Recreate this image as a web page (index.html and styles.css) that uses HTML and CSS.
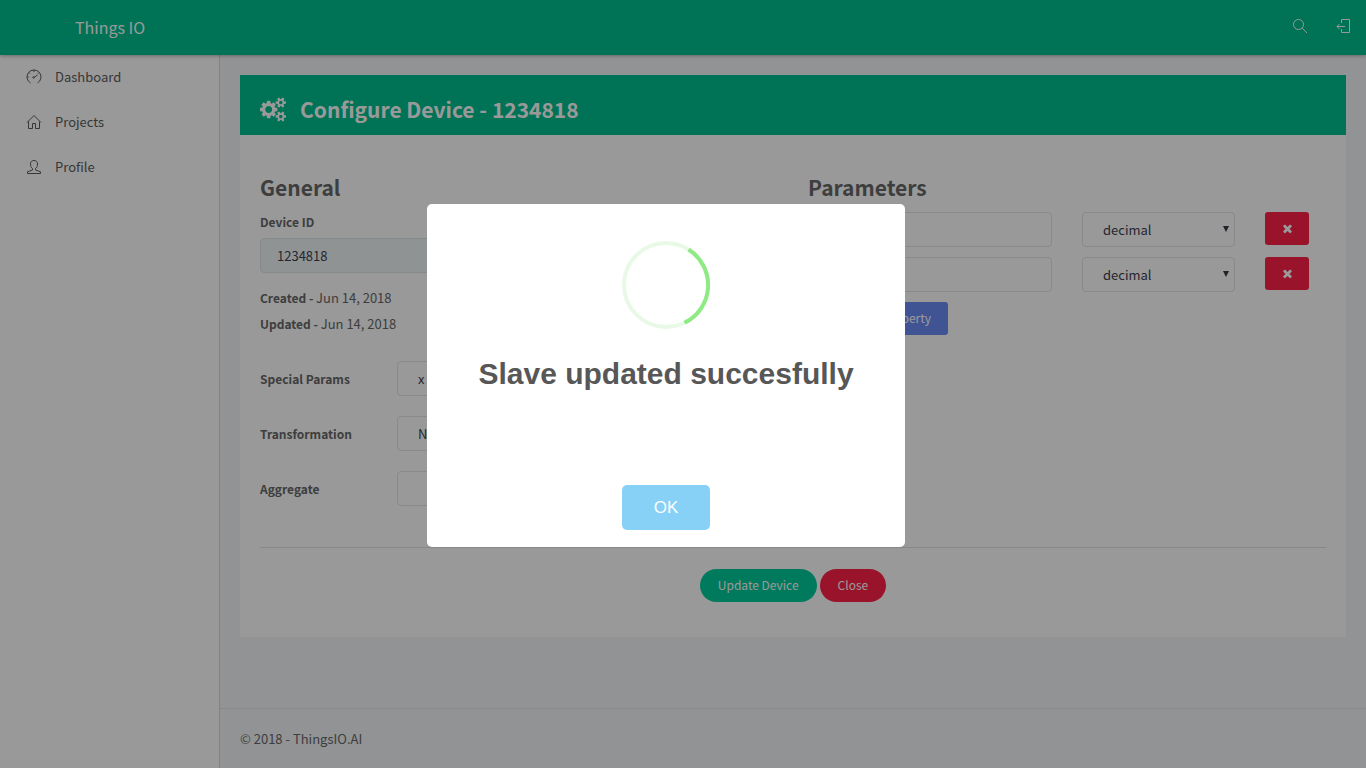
FILE: index.html
```html
<!DOCTYPE html>
<html lang="en">
<head>
<meta charset="utf-8">
<title>Things IO</title>
<link rel="stylesheet" href="styles.css">
</head>
<body>
<div class="app">
  <header class="topbar">
    <a class="brand" href="#">Things IO</a>
    <nav class="actions" aria-label="Account">
      <a href="#" aria-label="Search"><svg class="line-icon" viewBox="0 0 16 16"><circle cx="6.500" cy="6.500" r="5"/><path d="M10.200 10.200L15 15"/></svg></a>
      <a href="#" aria-label="Log out"><svg class="line-icon" viewBox="0 0 16 16"><path d="M5.500 5V1.500h8v13h-8V11M1 8.500h8M3.500 6L1 8.500l2.500 2.500"/></svg></a>
    </nav>
  </header>
  <div class="shell">
    <nav class="sidebar" aria-label="Main">
      <a href="#"><svg class="line-icon" viewBox="0 0 16 16"><path d="M4.500 14A7 7 0 1 1 11.500 14M8 8.500L11.500 6M8 1v2M3 3.500l1 1M13 3.500l-1 1M1.200 8h1.500"/><circle cx="7.500" cy="8.500" r=".7"/></svg>Dashboard</a>
      <a href="#"><svg class="line-icon" viewBox="0 0 16 16"><path d="M1 8.500L8 1.500l7 7M2.500 7.500v7h4v-5h3v5h4v-7"/></svg>Projects</a>
      <a href="#"><svg class="line-icon" viewBox="0 0 16 16"><path d="M6.500 9.500C5 8.500 4.500 7 4.500 5 4.500 2.500 6 1.500 8 1.500S11.500 2.500 11.500 5c0 2-.5 3.500-2 4.500V11l5 1.800v1.700h-13v-1.700l5-1.800z"/></svg>Profile</a>
    </nav>
    <div class="content">
      <main class="page">
        <section class="card">
          <h1 class="card-title"><svg class="gears" viewBox="0 0 1920 1792" aria-hidden="true"><path d="M896 896q0-106-75-181t-181-75-181 75-75 181 75 181 181 75 181-75 75-181zm768 512q0-52-38-90t-90-38-90 38-38 90q0 53 37.500 90.500t90.500 37.500 90.500-37.500 37.500-90.500zm0-1024q0-52-38-90t-90-38-90 38-38 90q0 53 37.500 90.500t90.500 37.500 90.500-37.500 37.500-90.500zm-384 421v185q0 10-7 19.500t-16 10.500l-155 24q-11 35-32 76 34 48 90 115 7 11 7 20 0 12-7 19-23 30-82.500 89.500t-78.500 59.500q-11 0-21-7l-115-90q-37 19-77 31-11 108-23 155-7 24-30 24h-186q-11 0-20-7.500t-10-17.500l-23-153q-34-10-75-31l-118 89q-7 7-20 7-11 0-21-8-144-133-144-160 0-9 7-19 10-14 41-53t47-61q-23-44-35-82l-152-24q-10-1-17-9.500t-7-19.500v-185q0-10 7-19.500t16-10.500l155-24q11-35 32-76-34-48-90-115-7-11-7-20 0-12 7-20 22-30 82-89t79-59q11 0 21 7l115 90q34-18 77-32 11-108 23-154 7-24 30-24h186q11 0 20 7.500t10 17.500l23 153q34 10 75 31l118-89q8-7 20-7 11 0 21 8 144 133 144 160 0 8-7 19-12 16-42 54t-45 60q23 48 34 82l152 23q10 2 17 10.500t7 19.500zm640 533v140q0 16-149 31-12 27-30 52 51 113 51 138 0 4-4 7-122 71-124 71-8 0-46-47t-52-68q-20 2-30 2t-30-2q-14 21-52 68t-46 47q-2 0-124-71-4-3-4-7 0-25 51-138-18-25-30-52-149-15-149-31v-140q0-16 149-31 13-29 30-52-51-113-51-138 0-4 4-7 4-2 35-20t59-34 30-16q8 0 46 46.500t52 67.500q20-2 30-2t30 2q51-71 92-112l6-2q4 0 124 70 4 3 4 7 0 25-51 138 17 23 30 52 149 15 149 31zm0-1024v140q0 16-149 31-12 27-30 52 51 113 51 138 0 4-4 7-122 71-124 71-8 0-46-47t-52-68q-20 2-30 2t-30-2q-14 21-52 68t-46 47q-2 0-124-71-4-3-4-7 0-25 51-138-18-25-30-52-149-15-149-31v-140q0-16 149-31 13-29 30-52-51-113-51-138 0-4 4-7 4-2 35-20t59-34 30-16q8 0 46 46.500t52 67.500q20-2 30-2t30 2q51-71 92-112l6-2q4 0 124 70 4 3 4 7 0 25-51 138 17 23 30 52 149 15 149 31z"/></svg>Configure Device - 1234818</h1>
          <form class="card-body">
            <div class="columns">
              <div class="general">
                <h2>General</h2>
                <label class="stacked" for="device-id">Device ID</label>
                <input class="control" id="device-id" value="1234818" readonly>
                <div class="dates">
                  <p><b>Created - </b>Jun 14, 2018</p>
                  <p><b>Updated - </b>Jun 14, 2018</p>
                </div>
                <div class="field">
                  <label for="special">Special Params</label>
                  <span class="select"><select class="control" id="special"><option>x</option></select></span>
                </div>
                <div class="field">
                  <label for="transformation">Transformation</label>
                  <span class="select"><select class="control" id="transformation"><option>None</option></select></span>
                </div>
                <div class="field">
                  <label for="aggregate">Aggregate</label>
                  <span class="select"><select class="control" id="aggregate"><option></option></select></span>
                </div>
              </div>
              <div class="parameters">
                <h2>Parameters</h2>
                <div class="param">
                  <input class="control" aria-label="Parameter 1 name">
                  <span class="select"><select class="control" aria-label="Parameter 1 type"><option>decimal</option></select></span>
                  <button class="btn remove" type="button" aria-label="Remove parameter 1"><svg viewBox="0 0 1792 1792"><path d="M1490 1322q0 40-28 68l-136 136q-28 28-68 28t-68-28l-294-294-294 294q-28 28-68 28t-68-28l-136-136q-28-28-28-68t28-68l294-294-294-294q-28-28-28-68t28-68l136-136q28-28 68-28t68 28l294 294 294-294q28-28 68-28t68 28l136 136q28 28 28 68t-28 68l-294 294 294 294q28 28 28 68z"/></svg></button>
                </div>
                <div class="param">
                  <input class="control" aria-label="Parameter 2 name">
                  <span class="select"><select class="control" aria-label="Parameter 2 type"><option>decimal</option></select></span>
                  <button class="btn remove" type="button" aria-label="Remove parameter 2"><svg viewBox="0 0 1792 1792"><path d="M1490 1322q0 40-28 68l-136 136q-28 28-68 28t-68-28l-294-294-294 294q-28 28-68 28t-68-28l-136-136q-28-28-28-68t28-68l294-294-294-294q-28-28-28-68t28-68l136-136q28-28 68-28t68 28l294 294 294-294q28-28 68-28t68 28l136 136q28 28 28 68t-28 68l-294 294 294 294q28 28 28 68z"/></svg></button>
                </div>
                <button class="btn add" type="button">Add New Property</button>
              </div>
            </div>
            <div class="buttons">
              <button class="btn pill update" type="button">Update Device</button>
              <button class="btn pill close" type="button">Close</button>
            </div>
          </form>
        </section>
      </main>
      <footer class="footer">© 2018 - ThingsIO.AI</footer>
    </div>
  </div>
</div>
<div class="overlay">
  <div class="dialog" role="dialog" aria-modal="true" aria-labelledby="dialog-title">
    <svg class="ring" viewBox="0 0 88 88" aria-hidden="true"><circle cx="44" cy="44" r="42"/><path d="M66.500 8.500A42 42 0 0 1 62.500 81.800"/></svg>
    <h2 class="dialog-title" id="dialog-title">Slave updated succesfully</h2>
    <button class="ok" type="button">OK</button>
  </div>
</div>
</body>
</html>
```
FILE: styles.css
```css
* { box-sizing: border-box; }

body {
  margin: 0;
  background: #f3f6f9;
  color: #686868;
  font: 13px/26px "Noto Sans CJK SC", "Noto Sans", sans-serif;
}

h1, h2, p { margin: 0; }
a { color: inherit; text-decoration: none; }
button, input, select { font: inherit; }

.app {
  display: flex;
  flex-direction: column;
  min-height: 100vh;
}

.topbar {
  display: flex;
  align-items: center;
  justify-content: space-between;
  height: 55px;
  padding: 0 14px 2px 75px;
  background: #00c08f;
  color: #fff;
  box-shadow: 0 1px 4px rgba(0, 0, 0, .3);
  z-index: 1;
}
.brand { font-size: 16px; }
.actions { display: flex; gap: 28px; padding-bottom: 2px; }
.actions a { display: flex; }

.line-icon {
  width: 16px;
  height: 16px;
  fill: none;
  stroke: currentColor;
}

.shell { display: flex; flex: 1; }

.sidebar {
  flex: 0 0 220px;
  background: #fff;
  border-right: 1px solid #d8d9db;
  color: #5c5c5c;
}
.sidebar a {
  display: flex;
  align-items: center;
  gap: 13px;
  height: 45px;
  padding: 0 0 2px 26px;
}

.content {
  display: flex;
  flex: 1;
  flex-direction: column;
  min-width: 0;
}
.page { flex: 1; padding: 20px; }

.card { background: #fff; }
.card-title {
  display: flex;
  align-items: center;
  gap: 14px;
  height: 60px;
  padding: 8px 20px 0;
  background: #00c08f;
  color: #fff;
  font-size: 21px;
  font-weight: 700;
}
.gears { width: 26px; height: 25px; fill: currentColor; }

.card-body { padding: 36px 20px 35px; }
.columns {
  display: grid;
  grid-template-columns: 1fr 1fr;
  gap: 30px;
  padding-bottom: 41px;
  border-bottom: 1px solid #e3e3e3;
}
.columns h2 {
  font-size: 21px;
  font-weight: 700;
  line-height: 32px;
}
label, b { font-size: 12px; font-weight: 700; }
.stacked { display: block; margin-top: 6px; }

.control {
  display: block;
  width: 100%;
  height: 35px;
  margin: 0;
  padding: 0 16px;
  border: 1px solid #dfe6e9;
  border-radius: 4px;
  background: #fff;
  color: #3f4050;
}
.stacked + .control { margin-top: 3px; background: #eef5f6; border-color: #dce5ea; }

.dates { margin: 12px 0 24px; }
.field {
  display: grid;
  grid-template-columns: 107fr 381fr;
  column-gap: 30px;
  margin-top: 20px;
}
.field label { line-height: 35px; }

.select { position: relative; display: block; }
.select .control { appearance: none; padding: 1px 20px 0; }
.select::after {
  content: "";
  position: absolute;
  top: 14px;
  right: 6px;
  border: 3px solid transparent;
  border-top: 6px solid #3a3a46;
  border-bottom: 0;
  pointer-events: none;
}

.param {
  display: grid;
  grid-template-columns: 244fr 153fr 61fr;
  column-gap: 30px;
  margin-top: 10px;
  align-items: start;
}
.columns h2 + .param { margin-top: 9px; }

.btn {
  height: 33px;
  padding: 0 17px 2px;
  border: 0;
  border-radius: 3px;
  color: #fff;
  font-size: 12px;
  line-height: 31px;
}
.remove { width: 44px; padding: 0; background: #ff2046; }
.remove svg { display: block; width: 13px; height: 13px; margin: auto; fill: #fff; }
.add { width: 140px; margin-top: 10px; background: #6c8df5; text-align: right; }

.buttons {
  display: flex;
  justify-content: center;
  gap: 3px;
  padding-top: 21px;
}
.pill { padding: 0 18px 2px; border-radius: 17px; }
.update { background: #00cb9b; }
.close { background: #ff2046; }

.footer {
  height: 60px;
  padding: 17px 20px;
  border-top: 1px solid #e2e6ea;
}

.overlay {
  position: fixed;
  inset: 0;
  z-index: 10;
  background: rgba(0, 0, 0, .4);
}
.dialog {
  position: absolute;
  top: 50%;
  left: 50%;
  width: 478px;
  margin: -180px 0 0 -256px;
  padding: 37px 17px 17px;
  border-radius: 5px;
  background: #fff;
  font-family: "Liberation Sans", sans-serif;
  text-align: center;
}
.ring { display: block; width: 88px; height: 88px; margin: 0 auto 25px; fill: none; stroke-width: 4px; }
.ring circle { stroke: #e8fae6; }
.ring path { stroke: #8eeb84; }
.dialog-title {
  color: #575757;
  font-size: 30px;
  font-weight: 700;
  line-height: 40px;
}
.ok {
  height: 45px;
  margin-top: 91px;
  padding: 0 32px;
  display: inline-block;
  vertical-align: top;
  border: 0;
  border-radius: 5px;
  background: #87d0f6;
  color: #fff;
  font-size: 17px;
}
```
